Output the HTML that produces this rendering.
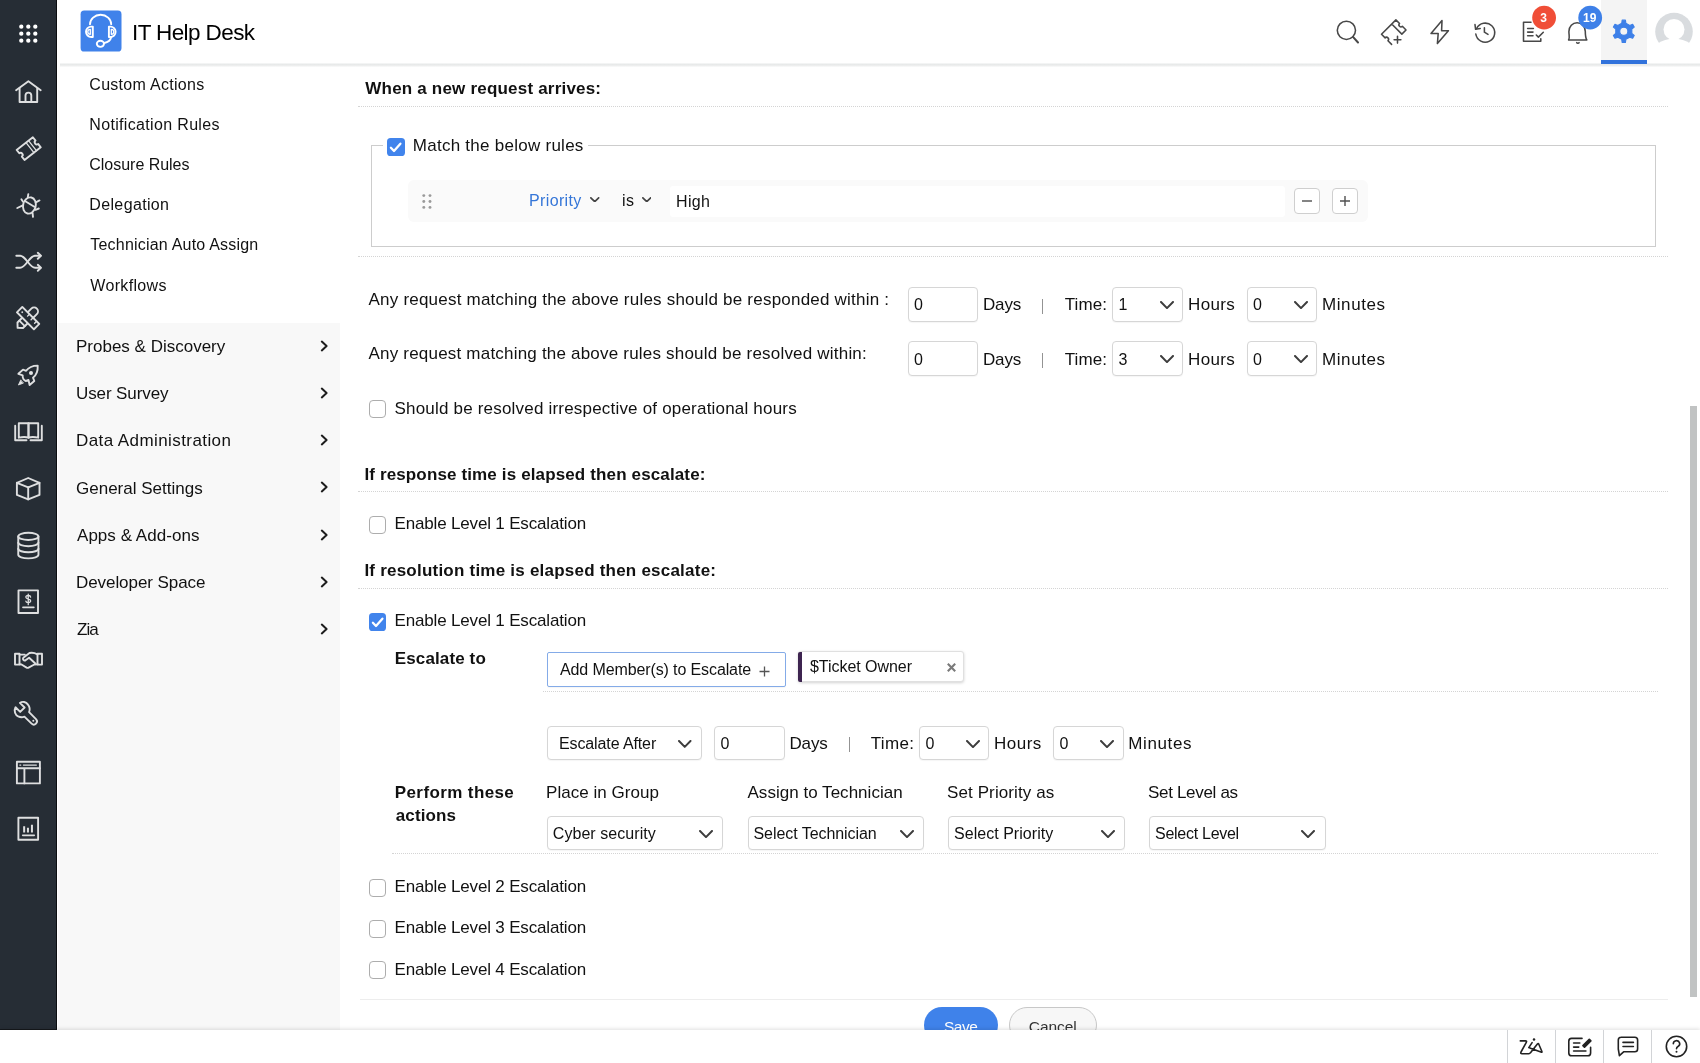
<!DOCTYPE html>
<html><head><meta charset="utf-8"><title>IT Help Desk</title>
<style>
*{box-sizing:border-box;margin:0;padding:0}
html,body{width:1700px;height:1063px;overflow:hidden;background:#fff}
body{font-family:"Liberation Sans",sans-serif;color:#111;position:relative}
.a{position:absolute}
.txt{position:absolute;left:0;top:0;width:1700px;height:1063px;will-change:transform}
.t{position:absolute;white-space:nowrap;line-height:1;font-family:"Liberation Sans",sans-serif}
.nav{left:0;top:0;width:56.5px;height:1029.7px;background:#262d35;border-right:1.4px solid #0b0d10;border-bottom:1.5px solid #15181c}
.nav svg{fill:none;stroke:#dedfe0;stroke-width:1.9;stroke-linecap:round;stroke-linejoin:round}
.hdr{left:60px;top:63.2px;width:1640px;height:3.4px;background:linear-gradient(#f8f9f9,#e6e8e8 42%,#f0f1f1 72%,#fcfcfc)}
.hi{position:absolute;width:28px;height:28px;fill:none;stroke:#3c3c3c;stroke-width:1.6;stroke-linecap:round;stroke-linejoin:round}
.side{left:58.2px;top:322.5px;width:281.5px;height:707.5px;background:#f8f8f8}
.dot{height:0;border-top:1px dotted #cfcfcf}
.cb{width:17.6px;height:17.8px;border:1.4px solid #adadad;border-radius:4px;background:#fff}
.cbc{width:17.5px;height:17.9px;border-radius:3.6px;background:#4184ec}
.in{height:35px;border:1px solid #d6d6d6;border-radius:4px;background:#fff;box-shadow:0 1px 1px rgba(0,0,0,.04)}
.chev{position:absolute;fill:none;stroke:#333;stroke-width:2;stroke-linecap:round;stroke-linejoin:round}
.sb{width:26px;height:26px;border:1px solid #cfcfcf;border-radius:4px;background:#fff}
.foot{left:0;top:1030px;width:1700px;height:33px;background:#fff;box-shadow:0 -1px 4px rgba(0,0,0,.13)}
.sep{top:1030px;width:1.3px;height:33px;background:#d2d4d7;margin-left:-0.3px}
.fi{position:absolute;width:28px;height:28px;fill:none;stroke:#222;stroke-width:1.6;stroke-linecap:round;stroke-linejoin:round}
</style></head><body>
<div class="a nav"><svg width="57" height="1030" viewBox="0 0 57 1030" style="position:absolute;left:0;top:0;width:57px;height:1030px">
<g fill="#fff" stroke="none"><circle cx="21.3" cy="26.7" r="2.15"/><circle cx="21.3" cy="33.7" r="2.15"/><circle cx="21.3" cy="40.7" r="2.15"/><circle cx="28.3" cy="26.7" r="2.15"/><circle cx="28.3" cy="33.7" r="2.15"/><circle cx="28.3" cy="40.7" r="2.15"/><circle cx="35.3" cy="26.7" r="2.15"/><circle cx="35.3" cy="33.7" r="2.15"/><circle cx="35.3" cy="40.7" r="2.15"/></g>
<g transform="translate(28.4 91.7)"><path d="M-12.3 -1.4 L0 -10.4 L12.3 -1.4"/><path d="M-8.8 -3.4 V10.3 H8.8 V-3.4"/><path d="M-2.9 10.3 V3.8 a2.9 2.9 0 0 1 5.8 0 V10.3"/></g>
<g transform="translate(28.7 148.6) rotate(-38)"><path d="M-10.3 -6.4 H10.3 V-2.1 a2.1 2.1 0 0 0 0 4.2 V6.4 H-10.3 V2.1 a2.1 2.1 0 0 0 0 -4.2 Z"/><path d="M1.6 -6.4 V6.4 M4.8 -6.4 V6.4" stroke-width="1.3"/></g>
<g><ellipse cx="29.4" cy="205.5" rx="6.3" ry="8.2" transform="rotate(14 29.4 205.5)"/><path d="M25.3 201.2 L34.3 206.8"/><path d="M27.8 197.4 L28.3 194.2"/><path d="M23 201.7 L21.4 199.3"/><path d="M22.8 205.4 L17.3 208"/><path d="M35.8 202.3 L39.5 200.4"/><path d="M35.5 209.8 L38.8 208.5"/><path d="M32.6 213.3 L33 216.9"/></g>
<g transform="translate(28.6 261.8)"><path d="M-12.3 -6 H-8.5 C-2.5 -6 0.5 6 6.5 6 H12"/><path d="M-12.3 6 H-8.5 C-2.5 6 0.5 -6 6.5 -6 H12"/><path d="M9.2 -9 L12.3 -6 L9.2 -3"/><path d="M9.2 3 L12.3 6 L9.2 9"/></g>
<g transform="translate(17.4 328.1) rotate(-45)"><path d="M0.3 0 L4 -3.9 H23.6 a3.9 3.9 0 0 1 0 7.8 H4 Z"/><path d="M6.6 -3.9 V3.9"/></g>
<g transform="translate(28.1 318.1) rotate(45)"><rect x="-12" y="-3.8" width="24" height="7.6" fill="#262d35"/><path d="M-1.8 -3.8 V-1 M3.2 -3.8 V-1 M8.2 -3.8 V-1" stroke-width="1.4"/><circle cx="-8.3" cy="0" r="0.9" fill="#e4e5e6" stroke="none"/></g>
<g><path d="M37.7 365.6 C33 365.6 28.5 367.5 26.1 370.8 L23 369.6 L18.4 373.8 L22.7 375.3 C22.2 378 24 380.6 25.8 381 L28.5 380 L29.6 385 L34.3 381 L33 377.7 C36.5 375 38 370.5 37.7 365.6 Z"/><circle cx="31" cy="372.9" r="2" fill="#e4e5e6" stroke="none"/><path d="M20.6 380.2 L18.4 385 L23.2 383.2 Z" fill="#e4e5e6" stroke-width="0.8"/></g>
<g transform="translate(28.5 432)"><path d="M-9.7 -8.7 H-0.0 V5.7 C-2.5 4.8 -6 4.8 -9.7 5.7 Z"/><path d="M9.7 -8.7 H0 V5.7 C2.5 4.8 6 4.8 9.7 5.7 Z"/><path d="M-13.3 -6.2 V8.3 H-2 M13.3 -6.2 V8.3 H2"/></g>
<g transform="translate(28.2 488.7)"><path d="M0 -10.7 L11.3 -5.9 V6.2 L0 10.7 L-11.3 6.2 V-5.9 Z"/><path d="M-11.3 -5.9 L0 -1.4 L11.3 -5.9"/><path d="M0 -1.4 V10.7"/></g>
<g transform="translate(28.35 545.6)"><ellipse cx="0" cy="-9.2" rx="10.1" ry="3.6"/><path d="M-10.1 -9.2 V9.2 a10.1 3.6 0 0 0 20.2 0 V-9.2"/><path d="M-10.1 -3 a10.1 3.6 0 0 0 20.2 0"/><path d="M-10.1 3.1 a10.1 3.6 0 0 0 20.2 0"/></g>
<g transform="translate(28.25 601.65)"><rect x="-9.75" y="-11.3" width="19.5" height="22.6"/><path d="M-5.2 5.7 H5.5" stroke-width="1.9"/><path d="M2.4 -4.6 a2.4 1.7 0 0 0 -4.8 0.3 c0 2.2 4.8 1.1 4.8 3.5 a2.4 1.7 0 0 1 -4.8 0.3 M0 -7.4 V3" stroke-width="1.3"/></g>
<g><path d="M15 653.7 H19.5 V664.6 H15 Z M37.5 653.7 H42 V664.6 H37.5 Z"/><path d="M19.5 654.6 H24.8"/><path d="M37.5 654.3 C35 653 32 652.3 29.5 653 L23.3 657.8 a1.7 1.7 0 0 0 2.2 2.5 L29.1 657.7 L35.1 663.3"/><path d="M19.5 664.2 L21.5 664.5 L26.6 667.6 a2 2 0 0 0 2 0 L34.3 664.5 L37.5 664.2"/></g>
<g><path d="M19.9 702.9 L24.6 707.5 L20.2 711.9 L15.5 707.3 C13.6 711 15.3 715 18.2 716.4 C20.4 717.4 22.5 717.4 24.4 716.6 L31.6 723.6 a3.1 3.1 0 0 0 4.4 -4.4 L29.1 712.2 C30 710 29.8 707 28 704.6 C26 701.8 22.5 701 19.9 702.9 Z"/><circle cx="33.3" cy="720.8" r="1" fill="#e4e5e6" stroke="none"/></g>
<g transform="translate(28.4 772.6)"><rect x="-11.5" y="-10.8" width="23" height="21.6"/><path d="M-11.5 -4.3 H11.5 M-4 -4.3 V10.8"/><path d="M-8.6 -7.5 H-7.6 M-5 -7.5 H8" stroke-width="1.2"/></g>
<g transform="translate(28.25 828.75)"><rect x="-9.85" y="-11.05" width="19.7" height="22.1"/><path d="M-5.6 6.6 H6" stroke-width="1.6"/><path d="M-4.1 3.7 V-2.4 M-0.3 3.7 V-0.9 M3.7 3.7 V-3.9" stroke-width="2" stroke-linecap="butt"/></g>
</svg></div>
<div class="a side"></div>
<svg class="chev" style="left:318.3px;top:337.5px;stroke:#1d1d1d;stroke-width:2" width="12" height="16" viewBox="0 0 12 16"><path d="M3.8 3.6 L8.6 8 L3.8 12.4"/></svg>
<svg class="chev" style="left:318.3px;top:384.8px;stroke:#1d1d1d;stroke-width:2" width="12" height="16" viewBox="0 0 12 16"><path d="M3.8 3.6 L8.6 8 L3.8 12.4"/></svg>
<svg class="chev" style="left:318.3px;top:432px;stroke:#1d1d1d;stroke-width:2" width="12" height="16" viewBox="0 0 12 16"><path d="M3.8 3.6 L8.6 8 L3.8 12.4"/></svg>
<svg class="chev" style="left:318.3px;top:479.2px;stroke:#1d1d1d;stroke-width:2" width="12" height="16" viewBox="0 0 12 16"><path d="M3.8 3.6 L8.6 8 L3.8 12.4"/></svg>
<svg class="chev" style="left:318.3px;top:526.5px;stroke:#1d1d1d;stroke-width:2" width="12" height="16" viewBox="0 0 12 16"><path d="M3.8 3.6 L8.6 8 L3.8 12.4"/></svg>
<svg class="chev" style="left:318.3px;top:573.7px;stroke:#1d1d1d;stroke-width:2" width="12" height="16" viewBox="0 0 12 16"><path d="M3.8 3.6 L8.6 8 L3.8 12.4"/></svg>
<svg class="chev" style="left:318.3px;top:621px;stroke:#1d1d1d;stroke-width:2" width="12" height="16" viewBox="0 0 12 16"><path d="M3.8 3.6 L8.6 8 L3.8 12.4"/></svg>
<div class="a hdr"></div>
<svg class="a" style="left:80px;top:10px" width="42" height="42" viewBox="80 10 42 42"><rect x="80.6" y="10.6" width="40.9" height="40.9" rx="3.6" fill="#4082ea"/><g fill="none" stroke="#fff" stroke-width="1.9" stroke-linecap="round" stroke-linejoin="round"><path d="M90 24.3 a10.6 9.5 0 0 1 21.2 0"/><path d="M92.8 26.6 V37 H91.2 a5.2 5.2 0 0 1 0 -10.4 Z"/><path d="M108.9 26.6 V37 H110.4 a5.2 5.2 0 0 0 0 -10.4 Z"/><path d="M90.3 29.3 V34.3 a2.5 2.5 0 0 1 0 -5 Z M111.3 29.3 V34.3 a2.5 2.5 0 0 0 0 -5 Z" stroke-width="1.3"/><path d="M111.2 37.2 C110.5 40 107.5 42.3 104.3 43"/><ellipse cx="100.4" cy="43.8" rx="3.6" ry="3.1"/></g></svg>
<div class="a" style="left:1601px;top:0;width:45.5px;height:60px;background:#f4f4f4"></div>
<div class="a" style="left:1601px;top:60px;width:45.7px;height:4px;background:#3273dc"></div>
<svg class="a" style="left:0;top:0" width="1700" height="66" viewBox="0 0 1700 66">
<g fill="none" stroke="#484848" stroke-width="1.55" stroke-linecap="round" stroke-linejoin="round">
<circle cx="1346.4" cy="30.3" r="9.1"/><path d="M1353 36.9 L1358 42.5" stroke-width="2"/>
<g transform="translate(1393.75 32.1) rotate(-45)"><path d="M-10.2 7.15 V2 a2 2 0 0 0 0 -4 V-7.15 H10.2 V-2 a2 2 0 0 0 0 4 V7.15 H4.3 V-7.15"/></g>
<path d="M1397.5 36.3 V43.1 M1394.1 39.7 H1400.9"/>
<path d="M1442 20.6 L1431 33.5 H1438.2 L1437.4 43.6 L1448.4 30.7 H1441.6 Z"/>
<path d="M1476.6 28.6 A9.5 9.5 0 1 1 1475.8 34"/><path d="M1475 24.6 L1475.6 29.3 L1480.2 28.6"/><path d="M1484.4 27.8 V32.2 L1488 34.4"/>
<path d="M1531 22.3 H1523.5 V41.2 H1540.8 V38.8"/><path d="M1527.6 28.4 H1533.4 M1527.6 32.1 H1533 M1527.6 35.8 H1533"/><path d="M1536.3 35 L1538.4 37.1 L1543.3 32.2"/>
<path d="M1568.6 40 H1586.8 C1585.4 37.5 1585.3 35.5 1585.3 31.5 a8.2 8.8 0 0 0 -16.4 0 C1568.9 35.5 1570 37.5 1568.6 40 Z"/><path d="M1576.7 42.6 a1.3 1.1 0 0 0 2.4 0"/>
</g>
<circle cx="1544.1" cy="17.7" r="11.9" fill="#f04e37"/>
<circle cx="1590.2" cy="17.7" r="11.9" fill="#3e80e8"/>
<path d="M1621.74 23.26 L1622.22 20.21 L1625.38 20.21 L1625.86 23.26 L1629.73 25.49 L1632.61 24.39 L1634.19 27.12 L1631.79 29.07 L1631.79 33.53 L1634.19 35.48 L1632.61 38.21 L1629.73 37.11 L1625.86 39.34 L1625.38 42.39 L1622.22 42.39 L1621.74 39.34 L1617.87 37.11 L1614.99 38.21 L1613.41 35.48 L1615.81 33.53 L1615.81 29.07 L1613.41 27.12 L1614.99 24.39 L1617.87 25.49 Z M1619.7 31.3 a4.1 4.1 0 1 0 8.2 0 a4.1 4.1 0 1 0 -8.2 0 Z" fill="#3e80e8" fill-rule="evenodd" stroke="#3e80e8" stroke-width="1.2" stroke-linejoin="round"/>
<defs><clipPath id="av2"><rect x="1650" y="30" width="50" height="23"/></clipPath></defs>
<circle cx="1674" cy="31.6" r="18.8" fill="#d9dcdf"/>
<g fill="#fff"><circle cx="1674" cy="29.5" r="10.5"/><g clip-path="url(#av2)"><ellipse cx="1674" cy="54.8" rx="23" ry="16"/></g></g>
</svg>
<div class="a dot" style="left:358px;top:106.4px;width:1310px;border-top:1px dotted #d4d4d4"></div>
<div class="a" style="left:371px;top:144.5px;width:1285px;height:102px;border:1px solid #cdcdcd"></div>
<div class="a" style="left:383px;top:139px;width:204.5px;height:12px;background:#fff"></div>
<div class="a cbc" style="left:387.4px;top:138px"><svg width="18" height="18" viewBox="0 0 18 18" style="position:absolute;left:0;top:0"><path d="M3.9 9.8 L7 13 L13.4 5.7" fill="none" stroke="#fff" stroke-width="2.3" stroke-linecap="round" stroke-linejoin="round"/></svg></div>
<div class="a" style="left:407.5px;top:180px;width:960px;height:42px;background:#fafafa;border-radius:6px"></div>
<svg class="a" style="left:421px;top:193px" width="12" height="17" viewBox="0 0 12 17" fill="#9a9a9a"><circle cx="2.8" cy="2.6" r="1.45"/><circle cx="2.8" cy="8.5" r="1.45"/><circle cx="2.8" cy="14.4" r="1.45"/><circle cx="9.0" cy="2.6" r="1.45"/><circle cx="9.0" cy="8.5" r="1.45"/><circle cx="9.0" cy="14.4" r="1.45"/></svg>
<svg class="chev" style="left:590.0px;top:196.8px;stroke:#444;stroke-width:1.7" width="9.5" height="5.5" viewBox="-0.85 -0.85 9.5 5.5"><path d="M0 0 L3.90 3.81 L7.80 0"/></svg>
<svg class="chev" style="left:641.8px;top:196.8px;stroke:#444;stroke-width:1.7" width="9.5" height="5.5" viewBox="-0.85 -0.85 9.5 5.5"><path d="M0 0 L3.90 3.81 L7.80 0"/></svg>
<div class="a" style="left:670px;top:186px;width:615px;height:31px;background:#fff;border-radius:3px"></div>
<div class="a sb" style="left:1294px;top:188px;width:26px;height:26px;"></div>
<div class="a sb" style="left:1332px;top:188px;width:26px;height:26px;"></div>
<svg class="a" style="left:1294px;top:188px" width="26" height="26" viewBox="0 0 26 26"><path d="M8 13 H18" stroke="#505050" stroke-width="1.4" fill="none"/></svg>
<svg class="a" style="left:1332px;top:188px" width="26" height="26" viewBox="0 0 26 26"><path d="M8 13 H18 M13 8 V18" stroke="#505050" stroke-width="1.4" fill="none"/></svg>
<div class="a dot" style="left:358px;top:256.4px;width:1310px;border-top:1px dotted #d4d4d4"></div>
<div class="a in" style="left:908px;top:287px;width:70px;height:35px;"></div>
<div class="a in" style="left:1112px;top:287px;width:71px;height:35px;"></div>
<svg class="chev" style="left:1159.5px;top:301.2px;stroke:#3d3d3d;stroke-width:2" width="14.0" height="8.1" viewBox="-1.0 -1.0 14.0 8.1"><path d="M0 0 L6.00 6.12 L12.00 0"/></svg>
<div class="a in" style="left:1247px;top:287px;width:70px;height:35px;"></div>
<svg class="chev" style="left:1293.5px;top:301.2px;stroke:#3d3d3d;stroke-width:2" width="14.0" height="8.1" viewBox="-1.0 -1.0 14.0 8.1"><path d="M0 0 L6.00 6.12 L12.00 0"/></svg>
<div class="a in" style="left:908px;top:341px;width:70px;height:35px;"></div>
<div class="a in" style="left:1112px;top:341px;width:71px;height:35px;"></div>
<svg class="chev" style="left:1159.5px;top:355.2px;stroke:#3d3d3d;stroke-width:2" width="14.0" height="8.1" viewBox="-1.0 -1.0 14.0 8.1"><path d="M0 0 L6.00 6.12 L12.00 0"/></svg>
<div class="a in" style="left:1247px;top:341px;width:70px;height:35px;"></div>
<svg class="chev" style="left:1293.5px;top:355.2px;stroke:#3d3d3d;stroke-width:2" width="14.0" height="8.1" viewBox="-1.0 -1.0 14.0 8.1"><path d="M0 0 L6.00 6.12 L12.00 0"/></svg>
<div class="a" style="left:1042.1px;top:298.5px;width:1.4px;height:15.5px;background:#939393"></div>
<div class="a" style="left:1042.1px;top:352.7px;width:1.4px;height:15.5px;background:#939393"></div>
<div class="a" style="left:849.1px;top:736.5px;width:1.4px;height:15.5px;background:#939393"></div>
<div class="a cb" style="left:368.5px;top:400.3px"></div>
<div class="a dot" style="left:358px;top:491.4px;width:1310px;border-top:1px dotted #d4d4d4"></div>
<div class="a cb" style="left:368.5px;top:516.2px"></div>
<div class="a dot" style="left:358px;top:588.4px;width:1310px;border-top:1px dotted #d4d4d4"></div>
<div class="a cbc" style="left:368.6px;top:613px"><svg width="18" height="18" viewBox="0 0 18 18" style="position:absolute;left:0;top:0"><path d="M3.9 9.8 L7 13 L13.4 5.7" fill="none" stroke="#fff" stroke-width="2.3" stroke-linecap="round" stroke-linejoin="round"/></svg></div>
<div class="a in" style="left:547px;top:652px;width:239px;height:35px;border:1.2px solid #84abe8;border-radius:2px"></div>
<svg class="a" style="left:758px;top:665px" width="13" height="13" viewBox="0 0 13 13"><path d="M1.5 6.5 H11.5 M6.5 1.5 V11.5" stroke="#555" stroke-width="1.3" fill="none"/></svg>
<div class="a" style="left:798px;top:651px;width:166px;height:31px;background:#fff;border:1px solid #e0e0e0;border-radius:3px;box-shadow:0 1px 3px rgba(0,0,0,.18)"></div>
<div class="a" style="left:798px;top:651.5px;width:3.6px;height:30px;background:#3d2450;border-radius:2px 0 0 2px"></div>
<svg class="a" style="left:946px;top:662px" width="11" height="11" viewBox="0 0 11 11"><path d="M1.8 1.8 L9.2 9.2 M9.2 1.8 L1.8 9.2" stroke="#7a7a7a" stroke-width="2.1" fill="none"/></svg>
<div class="a dot" style="left:543px;top:691.4px;width:1115px;border-top:1px dotted #d4d4d4"></div>
<div class="a in" style="left:547px;top:725.5px;width:155px;height:34.5px;"></div>
<svg class="chev" style="left:678.0px;top:739.9px;stroke:#3d3d3d;stroke-width:2" width="13.5" height="7.8" viewBox="-1.0 -1.0 13.5 7.8"><path d="M0 0 L5.75 5.83 L11.50 0"/></svg>
<div class="a in" style="left:714px;top:725.5px;width:71px;height:34.5px;"></div>
<div class="a in" style="left:919px;top:725.5px;width:70px;height:34.5px;"></div>
<svg class="chev" style="left:965.5px;top:739.7px;stroke:#3d3d3d;stroke-width:2" width="14.0" height="8.1" viewBox="-1.0 -1.0 14.0 8.1"><path d="M0 0 L6.00 6.12 L12.00 0"/></svg>
<div class="a in" style="left:1053px;top:725.5px;width:71px;height:34.5px;"></div>
<svg class="chev" style="left:1099.5px;top:739.7px;stroke:#3d3d3d;stroke-width:2" width="14.0" height="8.1" viewBox="-1.0 -1.0 14.0 8.1"><path d="M0 0 L6.00 6.12 L12.00 0"/></svg>
<div class="a in" style="left:547px;top:815.5px;width:176px;height:34.200000000000045px;"></div>
<svg class="chev" style="left:699.0px;top:829.7px;stroke:#3d3d3d;stroke-width:2" width="14.0" height="8.1" viewBox="-1.0 -1.0 14.0 8.1"><path d="M0 0 L6.00 6.12 L12.00 0"/></svg>
<div class="a in" style="left:747.5px;top:815.5px;width:176.5px;height:34.200000000000045px;"></div>
<svg class="chev" style="left:899.5px;top:829.7px;stroke:#3d3d3d;stroke-width:2" width="14.0" height="8.1" viewBox="-1.0 -1.0 14.0 8.1"><path d="M0 0 L6.00 6.12 L12.00 0"/></svg>
<div class="a in" style="left:948px;top:815.5px;width:177px;height:34.200000000000045px;"></div>
<svg class="chev" style="left:1100.5px;top:829.7px;stroke:#3d3d3d;stroke-width:2" width="14.0" height="8.1" viewBox="-1.0 -1.0 14.0 8.1"><path d="M0 0 L6.00 6.12 L12.00 0"/></svg>
<div class="a in" style="left:1149px;top:815.5px;width:177px;height:34.200000000000045px;"></div>
<svg class="chev" style="left:1301.0px;top:829.7px;stroke:#3d3d3d;stroke-width:2" width="14.0" height="8.1" viewBox="-1.0 -1.0 14.0 8.1"><path d="M0 0 L6.00 6.12 L12.00 0"/></svg>
<div class="a dot" style="left:392px;top:853.4px;width:1266px;border-top:1px dotted #d4d4d4"></div>
<div class="a cb" style="left:368.5px;top:879px"></div>
<div class="a cb" style="left:368.5px;top:920.2px"></div>
<div class="a cb" style="left:368.5px;top:961.2px"></div>
<div class="a" style="left:360px;top:999px;width:1308px;height:1px;background:#ededed"></div>
<div class="a" style="left:924px;top:1007px;width:74px;height:36px;border-radius:18px;background:#3f82ea"></div>
<div class="a" style="left:1009px;top:1007px;width:88px;height:36px;border-radius:18px;background:#f7f7f7;border:1px solid #c8c8c8"></div>
<div class="a" style="left:1689.5px;top:406px;width:7px;height:591px;background:#c1c3c3"></div>
<div class="txt">
<span class="t" style="left:132.0px;top:22px;font-size:22.5px;letter-spacing:-0.600px;color:#000;">IT Help Desk</span>
<span class="t" style="left:89.3px;top:77px;font-size:16px;letter-spacing:0.285px;">Custom Actions</span>
<span class="t" style="left:89.3px;top:117px;font-size:16px;letter-spacing:0.335px;">Notification Rules</span>
<span class="t" style="left:89.3px;top:157px;font-size:16px;letter-spacing:-0.025px;">Closure Rules</span>
<span class="t" style="left:89.3px;top:197px;font-size:16px;letter-spacing:0.356px;">Delegation</span>
<span class="t" style="left:90.3px;top:237px;font-size:16px;letter-spacing:0.200px;">Technician Auto Assign</span>
<span class="t" style="left:90.3px;top:278px;font-size:16px;letter-spacing:0.338px;">Workflows</span>
<span class="t" style="left:76.0px;top:338px;font-size:17px;letter-spacing:0.000px;">Probes &amp; Discovery</span>
<span class="t" style="left:76.0px;top:385px;font-size:17px;letter-spacing:-0.100px;">User Survey</span>
<span class="t" style="left:76.0px;top:432px;font-size:17px;letter-spacing:0.417px;">Data Administration</span>
<span class="t" style="left:76.0px;top:480px;font-size:17px;letter-spacing:0.000px;">General Settings</span>
<span class="t" style="left:77.0px;top:527px;font-size:17px;letter-spacing:0.038px;">Apps &amp; Add-ons</span>
<span class="t" style="left:76.0px;top:574px;font-size:17px;letter-spacing:-0.071px;">Developer Space</span>
<span class="t" style="left:77.0px;top:621px;font-size:17px;letter-spacing:-1.000px;">Zia</span>
<span class="t" style="left:1540.2px;top:12px;font-size:12px;font-weight:700;color:#fff;">3</span>
<span class="t" style="left:1583.0px;top:12px;font-size:12px;letter-spacing:0.000px;font-weight:700;color:#fff;">19</span>
<span class="t" style="left:365.3px;top:80px;font-size:17px;letter-spacing:0.200px;font-weight:700;">When a new request arrives:</span>
<span class="t" style="left:412.8px;top:137px;font-size:17px;letter-spacing:0.260px;">Match the below rules</span>
<span class="t" style="left:529.0px;top:193px;font-size:16px;letter-spacing:0.357px;color:#3576d8;">Priority</span>
<span class="t" style="left:622.0px;top:193px;font-size:16px;letter-spacing:0.500px;">is</span>
<span class="t" style="left:676.0px;top:194px;font-size:16px;letter-spacing:0.333px;">High</span>
<span class="t" style="left:368.5px;top:291px;font-size:17px;letter-spacing:0.219px;">Any request matching the above rules should be responded within :</span>
<span class="t" style="left:368.5px;top:345px;font-size:17px;letter-spacing:0.202px;">Any request matching the above rules should be resolved within:</span>
<span class="t" style="left:914.0px;top:297px;font-size:16px;">0</span>
<span class="t" style="left:983.0px;top:296px;font-size:17px;letter-spacing:-0.167px;">Days</span>
<span class="t" style="left:1064.8px;top:296px;font-size:17px;letter-spacing:0.050px;">Time:</span>
<span class="t" style="left:1188.0px;top:296px;font-size:17px;letter-spacing:0.375px;">Hours</span>
<span class="t" style="left:1253.0px;top:297px;font-size:16px;">0</span>
<span class="t" style="left:1322.0px;top:296px;font-size:17px;letter-spacing:0.583px;">Minutes</span>
<span class="t" style="left:914.0px;top:352px;font-size:16px;">0</span>
<span class="t" style="left:983.0px;top:351px;font-size:17px;letter-spacing:-0.167px;">Days</span>
<span class="t" style="left:1064.8px;top:351px;font-size:17px;letter-spacing:0.050px;">Time:</span>
<span class="t" style="left:1188.0px;top:351px;font-size:17px;letter-spacing:0.375px;">Hours</span>
<span class="t" style="left:1253.0px;top:352px;font-size:16px;">0</span>
<span class="t" style="left:1322.0px;top:351px;font-size:17px;letter-spacing:0.583px;">Minutes</span>
<span class="t" style="left:1118.5px;top:297px;font-size:16px;">1</span>
<span class="t" style="left:1118.5px;top:352px;font-size:16px;">3</span>
<span class="t" style="left:394.5px;top:400px;font-size:17px;letter-spacing:0.196px;">Should be resolved irrespective of operational hours</span>
<span class="t" style="left:364.4px;top:466px;font-size:17px;letter-spacing:0.137px;font-weight:700;">If response time is elapsed then escalate:</span>
<span class="t" style="left:394.5px;top:515px;font-size:17px;letter-spacing:-0.167px;">Enable Level 1 Escalation</span>
<span class="t" style="left:364.4px;top:562px;font-size:17px;letter-spacing:0.223px;font-weight:700;">If resolution time is elapsed then escalate:</span>
<span class="t" style="left:394.5px;top:612px;font-size:17px;letter-spacing:-0.167px;">Enable Level 1 Escalation</span>
<span class="t" style="left:394.8px;top:650px;font-size:17px;letter-spacing:0.120px;font-weight:700;">Escalate to</span>
<span class="t" style="left:560.0px;top:662px;font-size:16px;letter-spacing:-0.113px;">Add Member(s) to Escalate</span>
<span class="t" style="left:810.0px;top:659px;font-size:16px;letter-spacing:-0.042px;">$Ticket Owner</span>
<span class="t" style="left:559.0px;top:736px;font-size:16px;letter-spacing:-0.115px;">Escalate After</span>
<span class="t" style="left:720.5px;top:736px;font-size:16px;">0</span>
<span class="t" style="left:789.5px;top:735px;font-size:17px;letter-spacing:-0.167px;">Days</span>
<span class="t" style="left:870.8px;top:735px;font-size:17px;letter-spacing:0.300px;">Time:</span>
<span class="t" style="left:925.5px;top:736px;font-size:16px;">0</span>
<span class="t" style="left:994.0px;top:735px;font-size:17px;letter-spacing:0.500px;">Hours</span>
<span class="t" style="left:1059.5px;top:736px;font-size:16px;">0</span>
<span class="t" style="left:1128.2px;top:735px;font-size:17px;letter-spacing:0.633px;">Minutes</span>
<span class="t" style="left:394.8px;top:784px;font-size:17px;letter-spacing:0.392px;font-weight:700;">Perform these</span>
<span class="t" style="left:395.8px;top:807px;font-size:17px;letter-spacing:0.117px;font-weight:700;">actions</span>
<span class="t" style="left:546.0px;top:784px;font-size:17px;letter-spacing:0.038px;">Place in Group</span>
<span class="t" style="left:747.5px;top:784px;font-size:17px;letter-spacing:0.026px;">Assign to Technician</span>
<span class="t" style="left:947.0px;top:784px;font-size:17px;letter-spacing:0.107px;">Set Priority as</span>
<span class="t" style="left:1148.0px;top:784px;font-size:17px;letter-spacing:-0.318px;">Set Level as</span>
<span class="t" style="left:552.8px;top:826px;font-size:16px;letter-spacing:0.054px;">Cyber security</span>
<span class="t" style="left:753.5px;top:826px;font-size:16px;letter-spacing:-0.062px;">Select Technician</span>
<span class="t" style="left:954.0px;top:826px;font-size:16px;letter-spacing:0.036px;">Select Priority</span>
<span class="t" style="left:1155.0px;top:826px;font-size:16px;letter-spacing:-0.273px;">Select Level</span>
<span class="t" style="left:394.5px;top:878px;font-size:17px;letter-spacing:-0.167px;">Enable Level 2 Escalation</span>
<span class="t" style="left:394.5px;top:919px;font-size:17px;letter-spacing:-0.167px;">Enable Level 3 Escalation</span>
<span class="t" style="left:394.5px;top:961px;font-size:17px;letter-spacing:-0.167px;">Enable Level 4 Escalation</span>
<span class="t" style="left:944.0px;top:1019px;font-size:15.5px;letter-spacing:-0.467px;color:#fff;">Save</span>
<span class="t" style="left:1028.8px;top:1019px;font-size:15.5px;letter-spacing:-0.060px;color:#333;">Cancel</span>
</div>
<div class="a foot"></div>
<div class="a sep" style="left:1507px"></div>
<div class="a sep" style="left:1555px"></div>
<div class="a sep" style="left:1603px"></div>
<div class="a sep" style="left:1651px"></div>
<svg class="a" style="left:0;top:1030px" width="1700" height="33" viewBox="0 1030 1700 33">
<g fill="none" stroke="#222" stroke-width="1.6" stroke-linecap="round" stroke-linejoin="round">
<path d="M1520.3 1040.9 H1525.4 q1.7 0 0.9 1.5 L1521 1052 q-0.8 1.7 1 1.7 H1528.8 q1.1 0 1.7 -1 L1537.4 1044.1 q0.8 -1.2 1.4 0.1 L1541.8 1051.2 q0.6 1.5 -0.9 0.9 L1528.8 1047.6 L1532.1 1042.6"/><circle cx="1534" cy="1039.5" r="1.25" fill="#222" stroke="none"/>
<path d="M1582 1038.4 H1571.6 a2.8 2.8 0 0 0 -2.8 2.8 V1052.9 a2.8 2.8 0 0 0 2.8 2.8 H1587.8 a2.8 2.8 0 0 0 2.8 -2.8 V1047.3"/><path d="M1573.6 1043 H1579.8 M1573.6 1047.1 H1578.8 M1573.6 1051 H1585.9"/><path d="M1583 1045.6 L1589.3 1039.4 L1590.8 1040.9 L1584.5 1047.1 Z" fill="#222" stroke-width="1.8"/>
<path d="M1621 1037.2 H1634.8 a2.8 2.8 0 0 1 2.8 2.8 V1049 a2.8 2.8 0 0 1 -2.8 2.8 H1623.6 L1619.4 1055.6 L1618.3 1049 V1040 a2.8 2.8 0 0 1 2.8 -2.8 Z"/><path d="M1623 1042.4 H1633.4 M1623 1046.5 H1633.4"/>
<circle cx="1676.5" cy="1046.5" r="10.2"/><path d="M1673.3 1043.8 a3.2 3.1 0 1 1 4.7 2.7 c-1.1 .6 -1.5 1.2 -1.5 2.3"/><circle cx="1676.5" cy="1051.8" r="1" fill="#222" stroke="none"/>
</g></svg>
</body></html>
